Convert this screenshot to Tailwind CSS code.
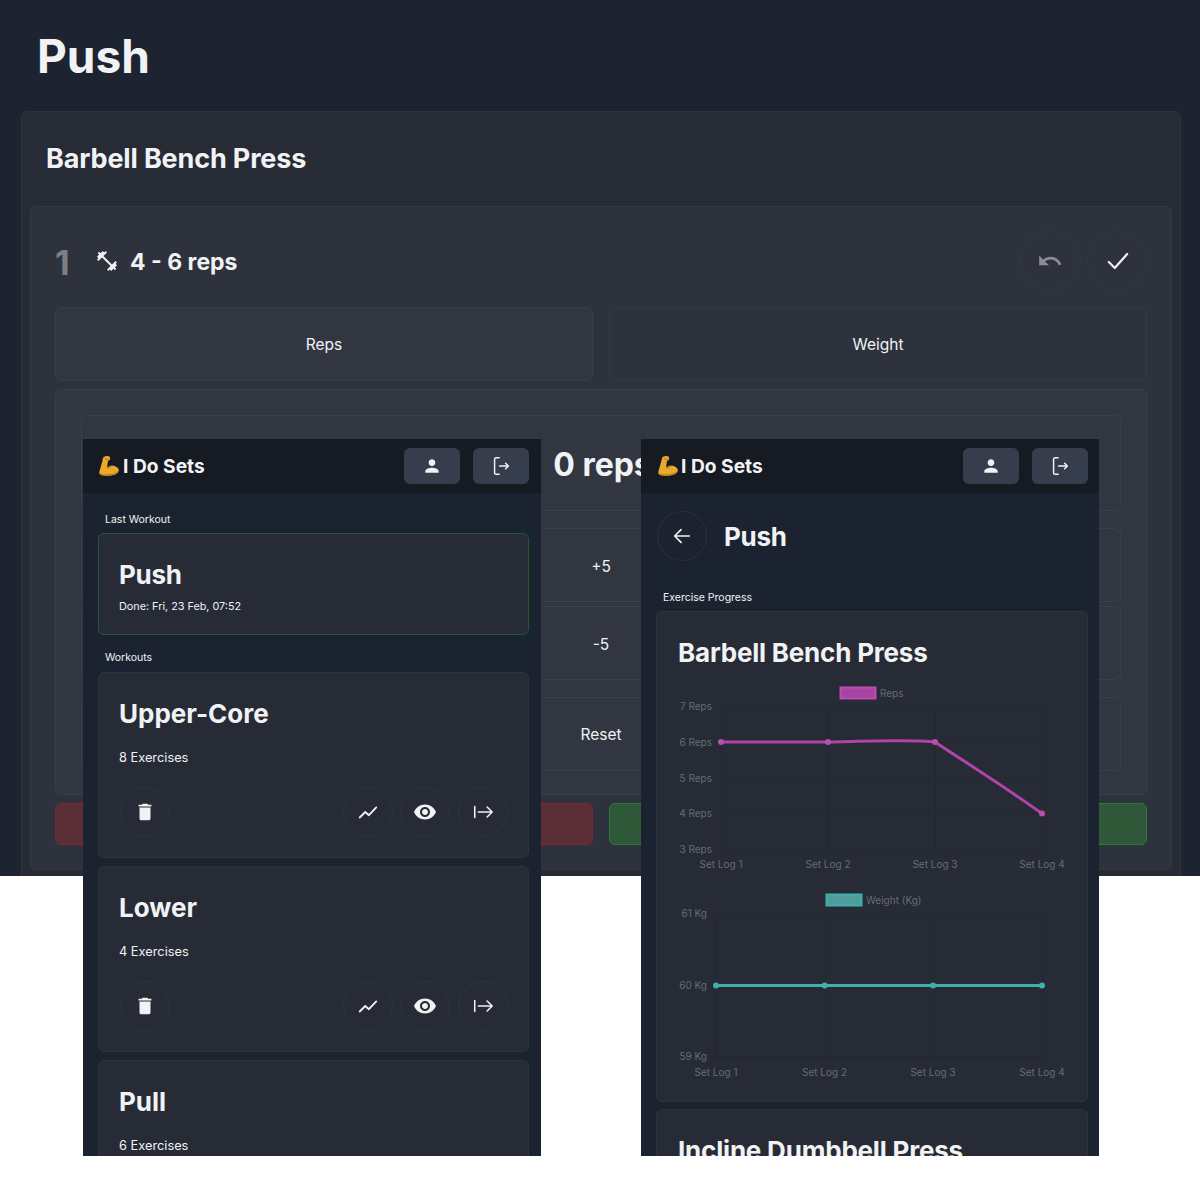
<!DOCTYPE html>
<html lang="en">
<head>
    <meta charset="UTF-8">
    <title>I Do Sets</title>
    <script src="https://cdn.jsdelivr.net/npm/@tailwindcss/browser@4"></script>
</head>
<body class="bg-white font-[Inter,sans-serif] text-[#f1f2f4]">

    <!-- Shared icons -->
    <svg class="hidden">
        <symbol id="i-person" viewBox="0 0 24 24"><path fill="currentColor" d="M12 12c2.210 0 4-1.790 4-4s-1.790-4-4-4-4 1.790-4 4 1.790 4 4 4zm0 2c-2.670 0-8 1.340-8 4v2h16v-2c0-2.660-5.330-4-8-4z"/></symbol>
        <symbol id="i-logout" viewBox="0 0 24 24"><path fill="none" stroke="currentColor" stroke-width="1.600" stroke-linecap="round" stroke-linejoin="round" d="M10 3H6.500A1.500 1.500 0 0 0 5 4.500v15A1.500 1.500 0 0 0 6.500 21H10M10.500 12H20M17 9l3 3-3 3"/></symbol>
        <symbol id="i-trash" viewBox="0 0 24 24"><path fill="currentColor" d="M6 19c0 1.100.9 2 2 2h8c1.100 0 2-.9 2-2V7H6v12zM19 4h-3.500l-1-1h-5l-1 1H5v2h14V4z"/></symbol>
        <symbol id="i-trend" viewBox="0 0 24 24"><path fill="none" stroke="currentColor" stroke-width="2" stroke-linecap="round" stroke-linejoin="round" d="M3 18l6-6 4 3.500L21 7"/></symbol>
        <symbol id="i-eye" viewBox="0 0 24 24"><path fill="currentColor" d="M12 4.500C7 4.500 2.730 7.610 1 12c1.730 4.390 6 7.500 11 7.500s9.270-3.110 11-7.500c-1.730-4.390-6-7.500-11-7.500zM12 17c-2.760 0-5-2.240-5-5s2.240-5 5-5 5 2.240 5 5-2.240 5-5 5zm0-8c-1.660 0-3 1.340-3 3s1.340 3 3 3 3-1.340 3-3-1.340-3-3-3z"/></symbol>
        <symbol id="i-start" viewBox="0 0 24 24"><path fill="none" stroke="currentColor" stroke-width="1.700" stroke-linecap="round" stroke-linejoin="round" d="M3 6v12M7 12h15M16.500 6.500 22 12l-5.500 5.500"/></symbol>
        <symbol id="i-arm" viewBox="0 0 20 20"><path fill="#eaaa2e" d="M5 .8C6.800-.2 9.800-.2 10.800 1c.6.8.5 2.200-.2 3L9 5l-1 6.500c2-1.700 5-2.200 7.500-1.500 2.500.7 4.300 2.300 4.300 4.200 0 2.400-3 4.500-7.300 5.200-3.500.6-8 .6-10.500-.3C.5 18.300 0 17 .4 15.500L3.500 4.500C3.800 2.800 4.200 1.400 5 .8z"/><path fill="#c18416" d="M6 2.800c1.200-.5 2.800-.5 3.600 0l-.6 2.200-1-1.300-2.200.3zM8 11.500c2-1.700 5-2.200 7.500-1.500-2.700.2-4.600 1.300-5.800 3.100-.8-.3-1.400-.9-1.700-1.600zM1 17.500c3.500 1 8 1 11.500.3 3-.6 5.600-1.800 7-3.500-.5 2.200-3.300 4.300-7 4.900-3.500.6-8 .6-10.500-.3-.4-.2-.8-.8-1-1.400z"/></symbol>
    </svg>

    <!-- Background screen: set logging -->
    <div class="h-[876px] overflow-hidden bg-[#1d2330]">
        <div class="h-[111px] pl-[37px] flex items-center">
            <h1 class="text-[46px] font-bold leading-none">Push</h1>
        </div>
        <div class="ml-[21px] mr-[19px] h-[800px] rounded-md border border-[#2e333e] bg-[#262b36] px-[8px]">
            <div class="h-[94px] pl-[16px] pb-[2px] flex items-center">
                <h2 class="text-[27px] font-bold leading-none tracking-[-0.15px]">Barbell Bench Press</h2>
            </div>
            <div class="h-[664px] rounded-md border border-[#333843] bg-[#2d323d] px-[24px]">
                <div class="h-[100px] pt-[24px] pb-[16px] flex items-center">
                    <span class="w-[40px] mt-[2px] text-[34px] font-bold text-[#7b7e85]">1</span>
                    <svg class="w-[24px] h-[24px] text-[#f1f2f4]" viewBox="0 0 24 24"><path fill="currentColor" d="M20.570 14.860L22 13.430 20.570 12 17 15.570 8.430 7 12 3.430 10.570 2 9.140 3.430 7.710 2 5.570 4.140 4.140 2.710 2.710 4.140l1.430 1.430L2 7.710l1.430 1.430L2 10.570 3.430 12 7 8.430 15.570 17 12 20.570 13.430 22l1.430-1.430L16.290 22l2.140-2.140 1.430 1.430 1.430-1.430-1.430-1.430L22 16.290z"/></svg>
                    <span class="ml-[11px] mt-[2px] text-[23px] font-bold">4 - 6 reps</span>
                    <div class="ml-auto flex gap-[8px]">
                        <button class="w-[60px] h-[60px] pl-[2px] rounded-full border border-[#323742] flex items-center justify-center text-[#8a8d94]">
                            <svg class="w-[26px] h-[26px]" viewBox="0 0 24 24"><path fill="currentColor" d="M12.500 8c-2.650 0-5.050.99-6.900 2.600L2 7v9h9l-3.620-3.620c1.390-1.160 3.160-1.880 5.120-1.880 3.540 0 6.550 2.310 7.600 5.500l2.370-.78C21.080 11.030 17.150 8 12.500 8z"/></svg>
                        </button>
                        <button class="w-[60px] h-[60px] pl-[2px] rounded-full border border-[#323742] flex items-center justify-center">
                            <svg class="w-[26px] h-[26px]" viewBox="0 0 24 24"><path fill="none" stroke="currentColor" stroke-width="2" stroke-linecap="round" stroke-linejoin="round" d="M3.500 13l5.500 5.500L20.500 5.500"/></svg>
                        </button>
                    </div>
                </div>
                <div class="grid grid-cols-2 gap-[16px] h-[74px] text-[15.500px]">
                    <div class="pt-[2px] rounded-md border border-[#383d48] bg-[#323640] flex items-center justify-center">Reps</div>
                    <div class="pt-[2px] rounded-md border border-[#343944] flex items-center justify-center">Weight</div>
                </div>
                <div class="mt-[8px] h-[406px] rounded-md border border-[#383d48] bg-[#323640] px-[25px] pt-[25px] text-[15.500px]">
                    <div class="h-[96px] pl-[3px] pt-[3px] rounded-md border border-[#3a3f4a] flex items-center justify-center text-[32px] font-bold">0 reps</div>
                    <div class="mt-[17px] h-[74px] pt-[3px] border border-[#3a3f4a] rounded-md flex items-center justify-center">+5</div>
                    <div class="mt-[4px] h-[74px] pt-[3px] border border-[#3a3f4a] rounded-md flex items-center justify-center">-5</div>
                    <div class="mt-[17px] h-[74px] pt-[2px] border border-[#3a3f4a] rounded-md flex items-center justify-center">Reset</div>
                </div>
                <div class="mt-[8px] grid grid-cols-2 gap-[16px] h-[42px]">
                    <div class="rounded-md border border-[#732c30] bg-[#5a2f35]"></div>
                    <div class="rounded-md border border-[#2f7a3a] bg-[#2f5838]"></div>
                </div>
            </div>
        </div>
    </div>

    <!-- Left window: workouts -->
    <div class="absolute left-[83px] top-[439px] w-[458px] h-[717px] overflow-hidden bg-[#1c2330]">
        <div class="h-[54px] bg-[#151a23] pl-[16px] pr-[12px] flex items-center">
            <svg class="w-[20px] h-[20px]"><use href="#i-arm"/></svg>
            <span class="ml-[4px] pt-[1px] text-[19.200px] font-bold">I Do Sets</span>
            <div class="ml-auto flex gap-[13px]">
                <button class="w-[56px] h-[36px] rounded-md bg-[#363e4e] flex items-center justify-center"><svg class="w-[20px] h-[20px]"><use href="#i-person"/></svg></button>
                <button class="w-[56px] h-[36px] rounded-md bg-[#363e4e] flex items-center justify-center"><svg class="w-[22px] h-[22px]"><use href="#i-logout"/></svg></button>
            </div>
        </div>
        <div class="pl-[15px] pr-[12px]">
            <div class="h-[40px] pt-[14px] pl-[7px] flex items-center text-[10.500px]">Last Workout</div>
            <div class="h-[102px] rounded-md border border-[#22592f] bg-[#262b36] px-[20px] pt-[21px]">
                <h3 class="text-[26px] font-bold leading-[40px] tracking-[-0.01em]">Push</h3>
                <p class="mt-[2px] text-[10.800px] leading-[20px]">Done: Fri, 23 Feb, 07:52</p>
            </div>
            <div class="h-[37px] pt-[8px] pl-[7px] flex items-center text-[10.500px]">Workouts</div>

            <div class="h-[186px] rounded-md border border-[#2e333e] bg-[#262b36] px-[20px] pt-[21px]">
                <h3 class="text-[26px] font-bold leading-[40px]">Upper-Core</h3>
                <p class="mt-[14px] text-[12.800px] leading-[20px]">8 Exercises</p>
                <div class="mt-[19px] flex gap-[7px]">
                    <button class="w-[50px] h-[50px] ml-[1px] mr-auto rounded-full border border-[#2e333e] flex items-center justify-center"><svg class="w-[22px] h-[22px]"><use href="#i-trash"/></svg></button>
                    <button class="w-[50px] h-[50px] rounded-full border border-[#2e333e] flex items-center justify-center"><svg class="w-[22px] h-[22px]"><use href="#i-trend"/></svg></button>
                    <button class="w-[50px] h-[50px] mr-[1px] rounded-full border border-[#2e333e] flex items-center justify-center"><svg class="w-[24px] h-[24px]"><use href="#i-eye"/></svg></button>
                    <button class="w-[50px] h-[50px] rounded-full border border-[#2e333e] flex items-center justify-center"><svg class="w-[22px] h-[22px]"><use href="#i-start"/></svg></button>
                </div>
            </div>

            <div class="mt-[8px] h-[186px] rounded-md border border-[#2e333e] bg-[#262b36] px-[20px] pt-[21px]">
                <h3 class="text-[26px] font-bold leading-[40px]">Lower</h3>
                <p class="mt-[14px] text-[12.800px] leading-[20px]">4 Exercises</p>
                <div class="mt-[19px] flex gap-[7px]">
                    <button class="w-[50px] h-[50px] ml-[1px] mr-auto rounded-full border border-[#2e333e] flex items-center justify-center"><svg class="w-[22px] h-[22px]"><use href="#i-trash"/></svg></button>
                    <button class="w-[50px] h-[50px] rounded-full border border-[#2e333e] flex items-center justify-center"><svg class="w-[22px] h-[22px]"><use href="#i-trend"/></svg></button>
                    <button class="w-[50px] h-[50px] mr-[1px] rounded-full border border-[#2e333e] flex items-center justify-center"><svg class="w-[24px] h-[24px]"><use href="#i-eye"/></svg></button>
                    <button class="w-[50px] h-[50px] rounded-full border border-[#2e333e] flex items-center justify-center"><svg class="w-[22px] h-[22px]"><use href="#i-start"/></svg></button>
                </div>
            </div>

            <div class="mt-[8px] h-[186px] rounded-md border border-[#2e333e] bg-[#262b36] px-[20px] pt-[21px]">
                <h3 class="text-[26px] font-bold leading-[40px]">Pull</h3>
                <p class="mt-[14px] text-[12.800px] leading-[20px]">6 Exercises</p>
            </div>
        </div>
    </div>

    <!-- Right window: exercise progress -->
    <div class="absolute left-[641px] top-[439px] w-[458px] h-[717px] overflow-hidden bg-[#1c2330]">
        <div class="h-[54px] bg-[#151a23] pl-[17px] pr-[11px] flex items-center">
            <svg class="w-[20px] h-[20px]"><use href="#i-arm"/></svg>
            <span class="ml-[3px] pt-[1px] text-[19.200px] font-bold">I Do Sets</span>
            <div class="ml-auto flex gap-[13px]">
                <button class="w-[56px] h-[36px] rounded-md bg-[#363e4e] flex items-center justify-center"><svg class="w-[20px] h-[20px]"><use href="#i-person"/></svg></button>
                <button class="w-[56px] h-[36px] rounded-md bg-[#363e4e] flex items-center justify-center"><svg class="w-[22px] h-[22px]"><use href="#i-logout"/></svg></button>
            </div>
        </div>
        <div class="pl-[15px] pr-[11px]">
            <div class="pt-[18px] pl-[1px] flex items-center gap-[17px]">
                <button class="w-[50px] h-[50px] rounded-full border border-[#2a303b] flex items-center justify-center">
                    <svg class="w-[22px] h-[22px]" viewBox="0 0 24 24"><path fill="none" stroke="currentColor" stroke-width="1.800" stroke-linecap="round" stroke-linejoin="round" d="M20 12H4M11 5l-7 7 7 7"/></svg>
                </button>
                <h2 class="text-[26px] font-bold tracking-[-0.01em]">Push</h2>
            </div>
            <div class="h-[50px] pt-[24px] pl-[7px] flex items-center text-[10.500px]">Exercise Progress</div>
            <div class="h-[491px] rounded-md border border-[#2e333e] bg-[#262b36]">
                <h3 class="pl-[21px] mt-[21px] text-[26px] font-bold leading-[40px] tracking-[-0.2px]">Barbell Bench Press</h3>

                <svg class="mt-[7px] block w-[430px] h-[195px]" viewBox="657 680 430 195">
                    <g stroke="#222732" stroke-width="1" fill="none">
                        <path d="M716 706.500H1042M716 742.500H1042M716 777.500H1042M716 813.500H1042M716 849.500H1042"/>
                        <path d="M721.500 706V855M828.500 706V855M935.500 706V855M1042.500 706V855"/>
                    </g>
                    <rect x="840.500" y="687.500" width="35" height="11" fill="#a843a1" stroke="#b94fb2" stroke-width="2"/>
                    <g class="text-[10px] fill-[#666b75]">
                        <text x="880" y="696.500">Reps</text>
                        <text x="712" y="710" text-anchor="end">7 Reps</text>
                        <text x="712" y="745.500" text-anchor="end">6 Reps</text>
                        <text x="712" y="781.500" text-anchor="end">5 Reps</text>
                        <text x="712" y="817" text-anchor="end">4 Reps</text>
                        <text x="712" y="853" text-anchor="end">3 Reps</text>
                        <text x="721" y="868" text-anchor="middle">Set Log 1</text>
                        <text x="828" y="868" text-anchor="middle">Set Log 2</text>
                        <text x="935" y="868" text-anchor="middle">Set Log 3</text>
                        <text x="1042" y="868" text-anchor="middle">Set Log 4</text>
                    </g>
                    <path d="M721 742 L828 742 C860 741.300 915 739.500 935 742 C965 762 1005 787 1042 813.500" fill="none" stroke="#b044a8" stroke-width="3"/>
                    <g fill="#b94fb2">
                        <circle cx="721" cy="742" r="3"/><circle cx="828" cy="742" r="3"/><circle cx="935" cy="742" r="3"/><circle cx="1042" cy="813.500" r="3"/>
                    </g>
                </svg>

                <svg class="mt-[10px] block w-[430px] h-[195px]" viewBox="657 885 430 195">
                    <g stroke="#222732" stroke-width="1" fill="none">
                        <path d="M711 913.500H1042M711 985.500H1042M711 1056.500H1042"/>
                        <path d="M716.500 913V1062M825.500 913V1062M933.500 913V1062M1042.500 913V1062"/>
                    </g>
                    <rect x="826.500" y="894.500" width="35" height="11" fill="#4f9c9c" stroke="#3fb0ac" stroke-width="2"/>
                    <g class="text-[10px] fill-[#666b75]">
                        <text x="866" y="903.500">Weight (Kg)</text>
                        <text x="707" y="917" text-anchor="end">61 Kg</text>
                        <text x="707" y="988.500" text-anchor="end">60 Kg</text>
                        <text x="707" y="1060" text-anchor="end">59 Kg</text>
                        <text x="716" y="1075.500" text-anchor="middle">Set Log 1</text>
                        <text x="824.500" y="1075.500" text-anchor="middle">Set Log 2</text>
                        <text x="933" y="1075.500" text-anchor="middle">Set Log 3</text>
                        <text x="1042" y="1075.500" text-anchor="middle">Set Log 4</text>
                    </g>
                    <path d="M716 985.500H1042" fill="none" stroke="#3fb0ac" stroke-width="3"/>
                    <g fill="#3fb0ac">
                        <circle cx="716" cy="985.500" r="3"/><circle cx="824.700" cy="985.500" r="3"/><circle cx="933" cy="985.500" r="3"/><circle cx="1042" cy="985.500" r="3"/>
                    </g>
                </svg>
            </div>
            <div class="mt-[7px] h-[186px] rounded-md border border-[#2e333e] bg-[#262b36] pl-[21px] pt-[21px]">
                <h3 class="text-[26px] font-bold leading-[40px] tracking-[-0.2px] whitespace-nowrap">Incline Dumbbell Press</h3>
            </div>
        </div>
    </div>

</body>
</html>
